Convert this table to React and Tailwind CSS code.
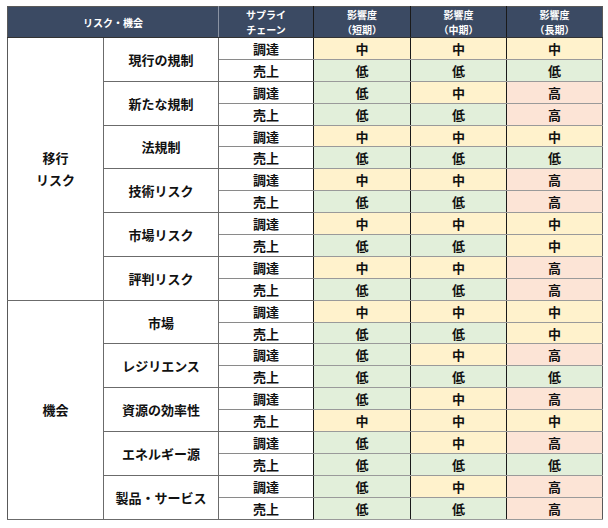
import React from "react";

const groups = [
  {
    name: ["移行", "リスク"],
    items: [
      ["現行の規制", ["中", "中", "中"], ["低", "低", "低"]],
      ["新たな規制", ["低", "中", "高"], ["低", "低", "高"]],
      ["法規制", ["中", "中", "中"], ["低", "低", "低"]],
      ["技術リスク", ["中", "中", "高"], ["低", "低", "高"]],
      ["市場リスク", ["中", "中", "中"], ["低", "低", "中"]],
      ["評判リスク", ["中", "中", "高"], ["低", "低", "高"]],
    ],
  },
  {
    name: ["機会"],
    items: [
      ["市場", ["中", "中", "中"], ["低", "低", "中"]],
      ["レジリエンス", ["低", "中", "高"], ["低", "低", "低"]],
      ["資源の効率性", ["低", "中", "高"], ["中", "中", "中"]],
      ["エネルギー源", ["低", "中", "高"], ["低", "低", "低"]],
      ["製品・サービス", ["低", "中", "高"], ["低", "低", "高"]],
    ],
  },
];

const levelBg = {
  低: "bg-[#e2efda]",
  中: "bg-[#fff2cc]",
  高: "bg-[#fce4d6]",
};

const Level = ({ v, last }) => (
  <td
    className={`${levelBg[v]} border-b border-b-[#9a9a9a] ${
      last ? "border-r border-r-[#595959]" : "border-r border-r-[#1a1a1a]"
    } text-center align-middle`}
  >
    {v}
  </td>
);

const App = () => {
  return (
    <div
      className="w-[608px] h-[528px] bg-white pt-[6px] pl-[7px]"
      style={{ fontFamily: '"Noto Sans CJK JP", "Noto Sans", sans-serif' }}
    >
      <table className="border-collapse table-fixed w-[595px] text-[13px] font-bold text-[#111] leading-none border border-[#595959]">
        <colgroup>
          <col className="w-[96px]" />
          <col className="w-[115px]" />
          <col className="w-[95px]" />
          <col className="w-[97px]" />
          <col className="w-[96px]" />
          <col className="w-[96px]" />
        </colgroup>
        <thead>
          <tr className="h-[31px] bg-[#3b4a63] text-white text-[10px] leading-[15px]">
            <th colSpan={2} className="border-r border-[#8a93a3] border-b border-b-[#333] font-bold">
              リスク・機会
            </th>
            <th className="border-r border-r-[#1a1a1a] border-b border-b-[#333] font-bold">
              サプライ
              <br />
              チェーン
            </th>
            <th className="border-r border-r-[#1a1a1a] border-b border-b-[#333] font-bold">
              影響度
              <br />
              （短期）
            </th>
            <th className="border-r border-r-[#1a1a1a] border-b border-b-[#333] font-bold">
              影響度
              <br />
              （中期）
            </th>
            <th className="border-b border-b-[#333] font-bold">
              影響度
              <br />
              （長期）
            </th>
          </tr>
        </thead>
        <tbody>
          {groups.map((g) =>
            g.items.map((item, i) => [
              <tr key={item[0] + "a"} className="h-[21.9px]">
                {i === 0 && (
                  <td
                    rowSpan={g.items.length * 2}
                    className="border-r border-b border-[#6b6b6b] text-center align-middle leading-[22px]"
                  >
                    {g.name.map((n) => (
                      <div key={n}>{n}</div>
                    ))}
                  </td>
                )}
                <td
                  rowSpan={2}
                  className="border-r border-b border-[#6b6b6b] text-center align-middle"
                >
                  {item[0]}
                </td>
                <td className="border-r border-r-[#1a1a1a] border-b border-b-[#8a8a8a] text-center align-middle">
                  調達
                </td>
                {item[1].map((v, k) => (
                  <Level key={k} v={v} last={k === 2} />
                ))}
              </tr>,
              <tr key={item[0] + "b"} className="h-[21.9px]">
                <td className="border-r border-r-[#1a1a1a] border-b border-b-[#6b6b6b] text-center align-middle">
                  売上
                </td>
                {item[2].map((v, k) => (
                  <Level key={k} v={v} last={k === 2} />
                ))}
              </tr>,
            ])
          )}
        </tbody>
      </table>
    </div>
  );
};

export default App;
